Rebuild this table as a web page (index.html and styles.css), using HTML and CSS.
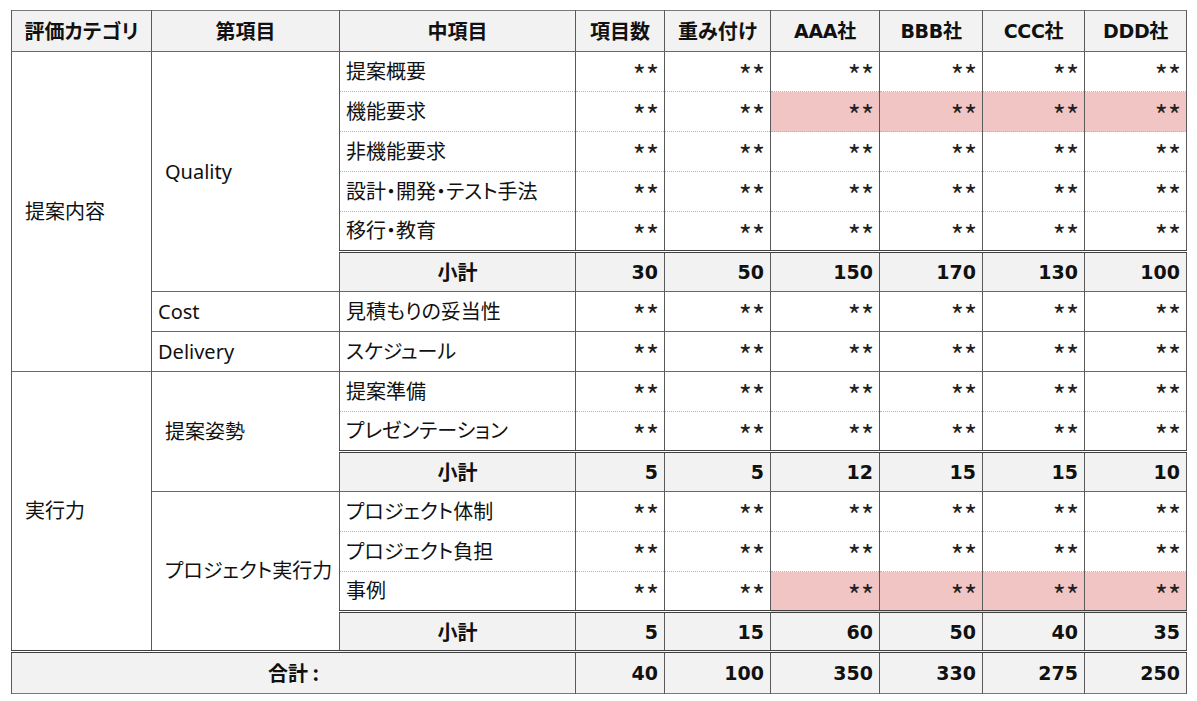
FILE: index.html
```html
<!DOCTYPE html>
<html lang="ja">
<head>
<meta charset="utf-8">
<title>評価表</title>
<link rel="stylesheet" href="styles.css">
</head>
<body>
<table class="eval">
  <colgroup>
    <col class="c1"><col class="c2"><col class="c3"><col class="c4"><col class="c5">
    <col class="c6"><col class="c7"><col class="c8"><col class="c9">
  </colgroup>
  <thead>
    <tr class="head">
      <th>評価カテゴリ</th><th>第項目</th><th>中項目</th><th>項目数</th><th>重み付け</th>
      <th>AAA社</th><th>BBB社</th><th>CCC社</th><th>DDD社</th>
    </tr>
  </thead>
  <tbody>
    <tr class="solid">
      <td class="cat" rowspan="8">提案内容</td>
      <td class="sub in" rowspan="6">Quality</td>
      <td class="mid">提案概要</td>
      <td class="ast">**</td><td class="ast">**</td><td class="ast">**</td><td class="ast">**</td><td class="ast">**</td><td class="ast">**</td>
    </tr>
    <tr class="dot">
      <td class="mid">機能要求</td>
      <td class="ast">**</td><td class="ast">**</td><td class="ast hl">**</td><td class="ast hl">**</td><td class="ast hl">**</td><td class="ast hl">**</td>
    </tr>
    <tr class="dot">
      <td class="mid">非機能要求</td>
      <td class="ast">**</td><td class="ast">**</td><td class="ast">**</td><td class="ast">**</td><td class="ast">**</td><td class="ast">**</td>
    </tr>
    <tr class="dot">
      <td class="mid">設計・開発・テスト手法</td>
      <td class="ast">**</td><td class="ast">**</td><td class="ast">**</td><td class="ast">**</td><td class="ast">**</td><td class="ast">**</td>
    </tr>
    <tr class="dot">
      <td class="mid">移行・教育</td>
      <td class="ast">**</td><td class="ast">**</td><td class="ast">**</td><td class="ast">**</td><td class="ast">**</td><td class="ast">**</td>
    </tr>
    <tr class="dbl subtotal">
      <td class="label">小計</td>
      <td class="num">30</td><td class="num">50</td><td class="num">150</td><td class="num">170</td><td class="num">130</td><td class="num">100</td>
    </tr>
    <tr class="solid">
      <td class="sub">Cost</td>
      <td class="mid">見積もりの妥当性</td>
      <td class="ast">**</td><td class="ast">**</td><td class="ast">**</td><td class="ast">**</td><td class="ast">**</td><td class="ast">**</td>
    </tr>
    <tr class="solid">
      <td class="sub">Delivery</td>
      <td class="mid">スケジュール</td>
      <td class="ast">**</td><td class="ast">**</td><td class="ast">**</td><td class="ast">**</td><td class="ast">**</td><td class="ast">**</td>
    </tr>
    <tr class="solid">
      <td class="cat" rowspan="7">実行力</td>
      <td class="sub in" rowspan="3">提案姿勢</td>
      <td class="mid">提案準備</td>
      <td class="ast">**</td><td class="ast">**</td><td class="ast">**</td><td class="ast">**</td><td class="ast">**</td><td class="ast">**</td>
    </tr>
    <tr class="dot">
      <td class="mid">プレゼンテーション</td>
      <td class="ast">**</td><td class="ast">**</td><td class="ast">**</td><td class="ast">**</td><td class="ast">**</td><td class="ast">**</td>
    </tr>
    <tr class="dbl subtotal">
      <td class="label">小計</td>
      <td class="num">5</td><td class="num">5</td><td class="num">12</td><td class="num">15</td><td class="num">15</td><td class="num">10</td>
    </tr>
    <tr class="solid">
      <td class="sub in" rowspan="4">プロジェクト実行力</td>
      <td class="mid">プロジェクト体制</td>
      <td class="ast">**</td><td class="ast">**</td><td class="ast">**</td><td class="ast">**</td><td class="ast">**</td><td class="ast">**</td>
    </tr>
    <tr class="dot">
      <td class="mid">プロジェクト負担</td>
      <td class="ast">**</td><td class="ast">**</td><td class="ast">**</td><td class="ast">**</td><td class="ast">**</td><td class="ast">**</td>
    </tr>
    <tr class="dot">
      <td class="mid">事例</td>
      <td class="ast">**</td><td class="ast">**</td><td class="ast hl">**</td><td class="ast hl">**</td><td class="ast hl">**</td><td class="ast hl">**</td>
    </tr>
    <tr class="dbl subtotal">
      <td class="label">小計</td>
      <td class="num">5</td><td class="num">15</td><td class="num">60</td><td class="num">50</td><td class="num">40</td><td class="num">35</td>
    </tr>
    <tr class="dbl total">
      <td class="label" colspan="3">合計 :</td>
      <td class="num">40</td><td class="num">100</td><td class="num">350</td><td class="num">330</td><td class="num">275</td><td class="num">250</td>
    </tr>
  </tbody>
</table>
</body>
</html>
```
FILE: styles.css
```css
html, body {
  margin: 0;
  padding: 0;
  background: #ffffff;
}

body {
  font-family: "Noto Sans", "Noto Sans CJK JP", sans-serif;
  font-size: 20px;
  color: #111111;
  font-feature-settings: "palt";
}

.eval {
  border-collapse: collapse;
  table-layout: fixed;
  width: 1176px;
  margin: 10px 0 0 11px;
  border: 1px solid #7a7a7a;
}

.c1 { width: 140px; }
.c2 { width: 188px; }
.c3 { width: 236px; }
.c4 { width: 89px; }
.c5 { width: 106px; }
.c6 { width: 109px; }
.c7 { width: 103px; }
.c8 { width: 102px; }
.c9 { width: 102px; }

.eval th,
.eval td {
  padding: 0 6px;
  border-left: 1px solid #5a5a5a;
  border-right: 1px solid #5a5a5a;
  border-top: none;
  border-bottom: none;
  white-space: nowrap;
  vertical-align: middle;
  line-height: 24px;
}

.head {
  height: 41px;
}

.head th {
  background: #f2f2f2;
  font-family: "DejaVu Sans", "Noto Sans CJK JP", sans-serif;
  font-weight: bold;
  font-size: 19px;
  text-align: center;
  border-bottom: 1px solid #6a6a6a;
  letter-spacing: -0.3px;
}

.head th:nth-child(-n+5) {
  font-family: "Noto Sans CJK JP", sans-serif;
  font-size: 20px;
  letter-spacing: 0;
}

.eval tbody tr {
  height: 40px;
}

.eval tbody tr.total {
  height: 42px;
}

.eval .solid td { border-top: 1px solid #6a6a6a; }
.eval .dot td { border-top: 1px dotted #b5b5b5; }
.eval .dbl td { border-top: 3px double #404040; }

.eval .cat {
  padding-left: 13px;
  text-align: left;
  background: #ffffff;
}

.eval .sub {
  text-align: left;
  background: #ffffff;
}

.eval .sub.in {
  padding-left: 13px;
}

.eval .mid {
  text-align: left;
}

.eval .ast {
  text-align: right;
  font-family: "Noto Sans CJK JP", sans-serif;
  font-size: 28px;
  line-height: 32px;
  color: #222222;
  padding-top: 5px;
  padding-bottom: 0;
  padding-right: 5px;
}

.eval .hl {
  background: #f2c5c5;
}

.eval .subtotal td,
.eval .total td {
  background: #f2f2f2;
}

.eval .label {
  text-align: center;
  font-family: "Noto Sans CJK JP", sans-serif;
  font-weight: bold;
}

.eval .num {
  text-align: right;
  font-family: "DejaVu Sans", sans-serif;
  font-weight: bold;
  font-size: 19px;
  color: #111111;
}
```
